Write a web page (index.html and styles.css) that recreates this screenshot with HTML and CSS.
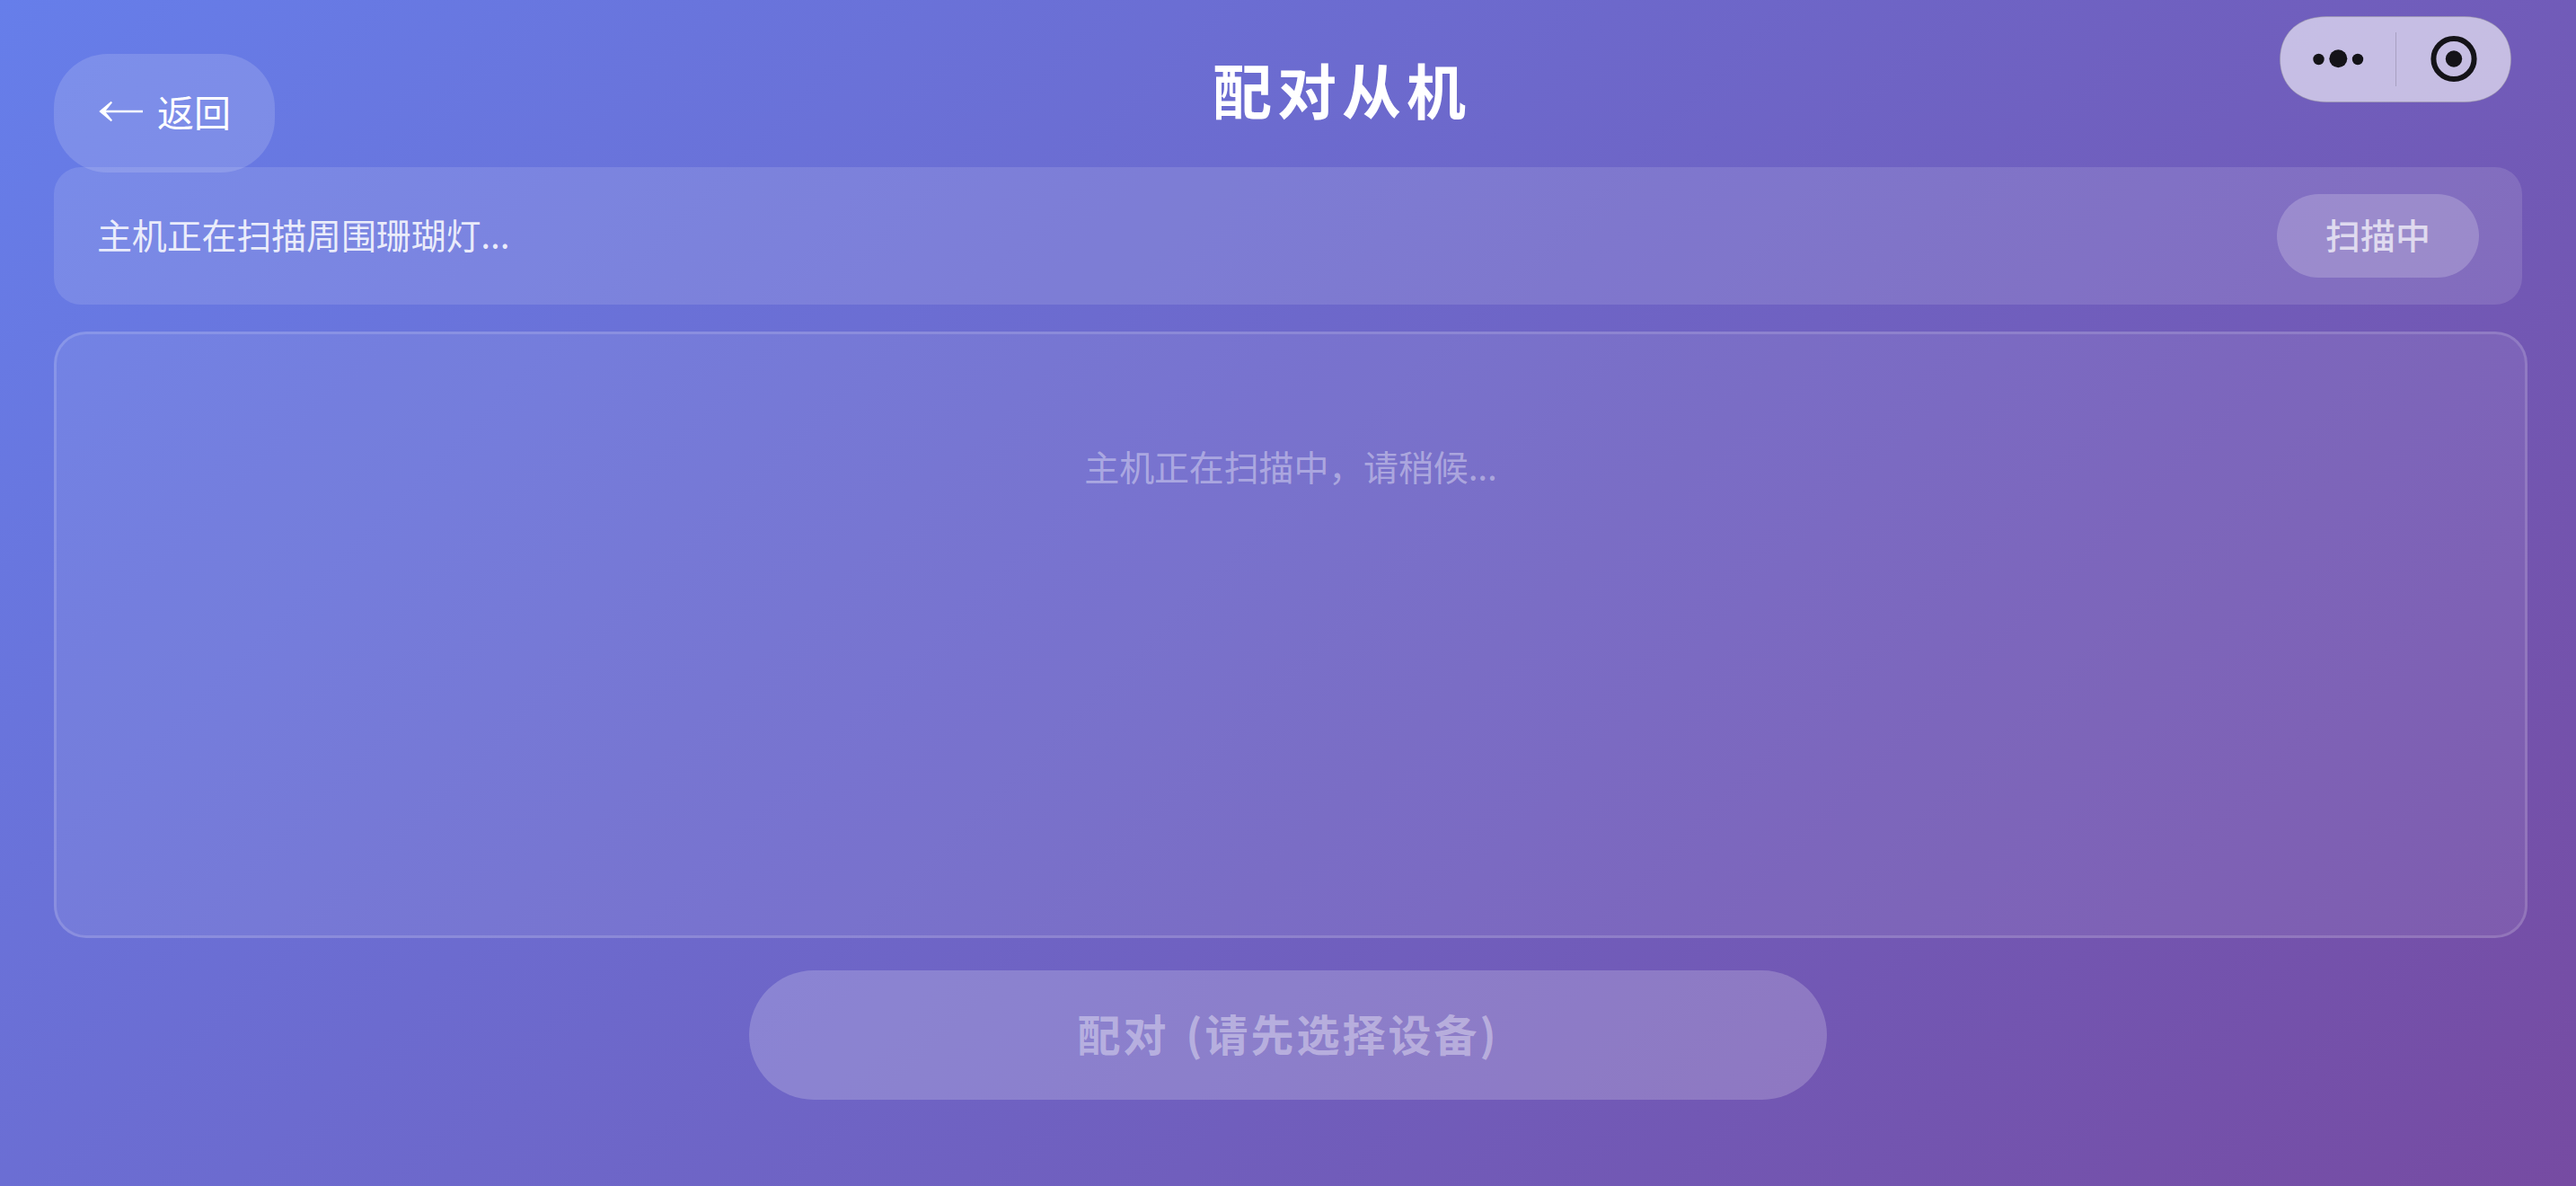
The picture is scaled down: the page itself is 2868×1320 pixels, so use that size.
FILE: index.html
```html
<!DOCTYPE html>
<html lang="zh-CN">

<head>
  <meta charset="UTF-8">
  <meta name="viewport" content="width=device-width, initial-scale=1.0">
  <title>配对从机</title>
  <link rel="stylesheet" href="styles.css">
</head>

<body>
  <div class="capsule">
    <svg width="258" height="96" viewBox="0 0 258 96">
      <path class="capsule-bg" d="M52 0.5 H206 C238 0.5 257.5 20 257.5 48 C257.5 76 238 95.5 206 95.5 H52 C20 95.5 0.5 76 0.5 48 C0.5 20 20 0.5 52 0.5 Z" />
      <g class="capsule-icon">
        <circle cx="43.5" cy="48" r="6.2" />
        <circle cx="65.3" cy="47.2" r="10" />
        <circle cx="87" cy="48" r="6.2" />
        <circle cx="194" cy="47.5" r="9.2" />
      </g>
      <circle class="capsule-ring" cx="194" cy="47.5" r="22.6" />
      <path class="capsule-line" d="M129.5 18 V78" />
    </svg>
  </div>

  <div class="container">
    <div class="header">
      <button class="back-btn">
        <svg class="arrow" width="50" height="24" viewBox="0 0 50 24">
          <path class="arrow-line" d="M4 12 H49" />
          <path class="arrow-head" d="M0.3 12 L13.7 0.8 L15 2.2 L7 12 L15 21.8 L13.7 23.2 Z" />
        </svg>
        <span class="back-text">返回</span>
      </button>
      <h1 class="title">配对从机</h1>
    </div>

    <div class="status-bar">
      <span class="status-text">主机正在扫描周围珊瑚灯...</span>
      <button class="scan-btn" disabled>扫描中</button>
    </div>

    <div class="device-list">
      <p class="empty-text">主机正在扫描中，请稍候...</p>
    </div>

    <button class="pair-btn" disabled>配对 (请先选择设备)</button>
  </div>
</body>

</html>
```
FILE: styles.css
```css
* {
  box-sizing: border-box;
}

html,
body {
  width: 100%;
  height: 100%;
  margin: 0;
}

body {
  font-family: "Noto Sans CJK SC", sans-serif;
  background: linear-gradient(135deg, #667eea 0%, #764ba2 100%);
  overflow: hidden;
}

button {
  padding: 0;
  border: none;
  font-family: inherit;
  color: #fff;
}

.container {
  display: flex;
  flex-direction: column;
  height: 100%;
  padding: 60px 60px 96px;
}

.header {
  display: flex;
  align-items: flex-start;
  height: 126px;
  padding-right: 126px;
}

.back-btn {
  display: flex;
  align-items: center;
  flex-shrink: 0;
  gap: 15px;
  width: 246px;
  height: 132px;
  padding-left: 50px;
  border-radius: 60px;
  background: rgba(255, 255, 255, 0.15);
  font-size: 41px;
  font-weight: 400;
}

.back-text {
  padding-bottom: 6px;
}

.arrow {
  margin-top: -5px;
}

.arrow-line {
  fill: none;
  stroke: #fff;
  stroke-width: 2.6;
}

.arrow-head {
  fill: #fff;
}

.title {
  flex: 1;
  margin: 0;
  font-size: 66px;
  font-weight: 700;
  line-height: 76px;
  letter-spacing: 6px;
  text-align: center;
  color: #fff;
}

.status-bar {
  display: flex;
  justify-content: space-between;
  align-items: center;
  height: 153px;
  padding: 0 48px;
  border-radius: 30px;
  background: rgba(255, 255, 255, 0.12);
}

.status-text {
  padding-bottom: 6px;
  font-size: 39px;
  letter-spacing: -0.15px;
  color: rgba(255, 255, 255, 0.85);
}

.scan-btn {
  width: 225px;
  height: 93px;
  padding-bottom: 5px;
  border-radius: 48px;
  background: rgba(255, 255, 255, 0.2);
  font-size: 39px;
  font-weight: 500;
  color: rgba(255, 255, 255, 0.7);
}

.device-list {
  height: 675px;
  margin: 30px -6px 36px 0;
  padding-top: 117px;
  border: 3px solid rgba(255, 255, 255, 0.15);
  border-radius: 36px;
  background: rgba(255, 255, 255, 0.08);
}

.empty-text {
  margin: 0;
  font-size: 39px;
  line-height: 58px;
  letter-spacing: -0.15px;
  text-align: center;
  color: rgba(255, 255, 255, 0.4);
}

.pair-btn {
  align-self: center;
  width: 1200px;
  height: 144px;
  padding-bottom: 6px;
  border-radius: 72px;
  background: rgba(255, 255, 255, 0.2);
  font-size: 48px;
  font-weight: 700;
  letter-spacing: 3px;
  word-spacing: 5px;
  color: rgba(255, 255, 255, 0.4);
}

/* mini program menu */
.capsule {
  position: absolute;
  top: 18px;
  right: 72px;
  width: 258px;
  height: 96px;
}

.capsule-bg {
  fill: rgba(255, 255, 255, 0.6);
  stroke: rgba(160, 160, 160, 0.5);
  stroke-width: 1;
}

.capsule-icon {
  fill: #141318;
}

.capsule-ring {
  fill: none;
  stroke: #141318;
  stroke-width: 6;
}

.capsule-line {
  stroke: rgba(0, 0, 0, 0.15);
  stroke-width: 1;
}
```
